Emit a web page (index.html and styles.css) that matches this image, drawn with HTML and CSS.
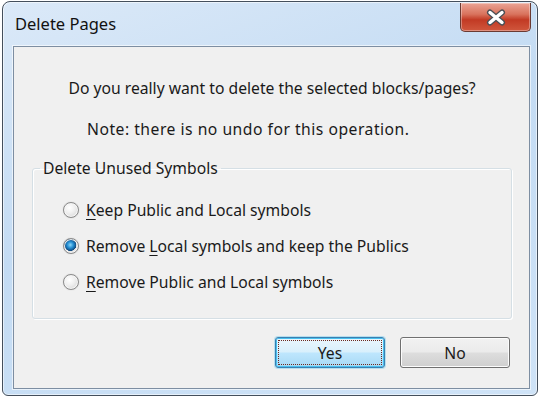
FILE: index.html
```html
<!DOCTYPE html>
<html lang="en">

<head>
    <meta charset="UTF-8">
    <title>Delete Pages</title>
    <link rel="stylesheet" href="styles.css">
</head>

<body>
    <div class="window">
        <div class="titlebar">
            <span class="title">Delete Pages</span>
            <button class="close-btn" title="Close">
                <svg width="22" height="17" viewBox="0 0 22 17">
                    <path d="M5 3.5 L17 13.5 M17 3.5 L5 13.5" stroke="#4b4f55" stroke-width="6" stroke-linecap="round" />
                    <path d="M5 3.5 L17 13.5 M17 3.5 L5 13.5" stroke="#ffffff" stroke-width="3.4" stroke-linecap="round" />
                </svg>
            </button>
        </div>

        <div class="client">
            <p class="message">Do you really want to delete the selected blocks/pages?</p>
            <p class="message note">Note: there is no undo for this operation.</p>

            <fieldset class="group">
                <legend>Delete Unused Symbols</legend>
                <label class="option">
                    <input type="radio" name="symbols">
                    <span><u>K</u>eep Public and Local symbols</span>
                </label>
                <label class="option">
                    <input type="radio" name="symbols" checked>
                    <span>Remove <u>L</u>ocal symbols and keep the Publics</span>
                </label>
                <label class="option">
                    <input type="radio" name="symbols">
                    <span><u>R</u>emove Public and Local symbols</span>
                </label>
            </fieldset>

            <div class="actions">
                <button class="btn btn-default">Yes</button>
                <button class="btn">No</button>
            </div>
        </div>
    </div>
</body>

</html>
```

FILE: styles.css
```css
body {
    margin: 0;
    padding: 1px 2px;
    background: #ffffff;
    font-family: "Noto Sans", "Open Sans", sans-serif;
    font-size: 15.7px;
    color: #1a1a1a;
}

.window {
    width: 534px;
    height: 393px;
    border: 1px solid #444f5c;
    border-radius: 8px 8px 6px 6px;
    background: linear-gradient(160deg, #dbe9f8 0%, #c3dbf3 45%, #cfe3f7 100%);
    box-shadow: inset 0 0 0 1px rgba(255, 255, 255, 0.55);
    display: flex;
    flex-direction: column;
    overflow: hidden;
}

.titlebar {
    height: 44px;
    display: flex;
    align-items: flex-start;
    padding-left: 12px;
}

.title {
    margin-top: 10px;
    font-size: 16.5px;
    color: #111111;
}

.close-btn {
    margin-left: auto;
    margin-right: 6px;
    margin-top: 1px;
    width: 71px;
    height: 29px;
    border: 1px solid #6b3a32;
    border-top: none;
    border-radius: 0 0 5px 5px;
    background: linear-gradient(to bottom, #eba495 0%, #d9735d 40%, #c23a24 60%, #d0573d 100%);
    box-shadow: inset 0 0 0 1px rgba(255, 255, 255, 0.35);
    display: flex;
    align-items: center;
    justify-content: center;
    padding: 0;
    cursor: pointer;
}

.client {
    flex: 1;
    margin: 0 7px 6px 10px;
    border: 1px solid #7d8ea2;
    background: #f0f0f0;
    box-shadow: 0 0 0 1px rgba(255, 255, 255, 0.6);
    display: flex;
    flex-direction: column;
    padding: 31px 17px 0 18px;
}

.message {
    margin: 0;
    line-height: 20px;
    text-align: center;
}

.note {
    margin-top: 21px;
    text-align: left;
    padding-left: 55px;
    letter-spacing: 0.5px;
}

.group {
    margin: 19px 0 0 0;
    padding: 22px 0 26px 30px;
    border: 1px solid #d5dfe5;
    border-radius: 3px;
    box-shadow: inset 1px 1px 0 #ffffff, 1px 1px 0 #ffffff;
    display: flex;
    flex-direction: column;
    gap: 16px;
}

.group legend {
    margin-left: -23px;
    padding: 0 3px;
    line-height: 20px;
}

.option {
    display: flex;
    align-items: center;
    gap: 7px;
    line-height: 20px;
}

.option input {
    appearance: none;
    margin: 0;
    width: 16px;
    height: 16px;
    border-radius: 50%;
    border: 1px solid #8a8a8a;
    background: radial-gradient(circle at 40% 35%, #ffffff 0%, #f0f0f0 40%, #cfcfcf 100%);
    box-shadow: inset 0 0 0 1px #f6f6f6, 0 0 1px #b0b0b0;
}

.option input:checked {
    background: radial-gradient(circle at 45% 42%, #8bd6f8 0%, #238ed3 28%, #114a80 52%, #e4e4e4 56%, #d2d2d2 100%);
}

.option u {
    text-underline-offset: 3px;
}

.actions {
    display: flex;
    justify-content: flex-end;
    gap: 15px;
    margin-top: 18px;
    padding-right: 2px;
}

.btn {
    width: 110px;
    height: 31px;
    font-family: inherit;
    font-size: 15.7px;
    color: #1a1a1a;
    border: 1px solid #707070;
    border-radius: 3px;
    background: linear-gradient(to bottom, #f2f2f2 0%, #ebebeb 48%, #dddddd 52%, #cfcfcf 100%);
    box-shadow: inset 0 0 0 1px #fcfcfc;
    cursor: pointer;
}

.btn-default {
    border-color: #3c7fb1;
    background: linear-gradient(to bottom, #eaf6fd 0%, #d9f0fc 48%, #bee6fd 52%, #a7d9f5 100%);
    box-shadow: inset 0 0 0 1px #48c0ee, 0 0 0 1px rgba(72, 192, 238, 0.35);
    outline: 1px dotted #6b2a20;
    outline-offset: -4px;
}
```
